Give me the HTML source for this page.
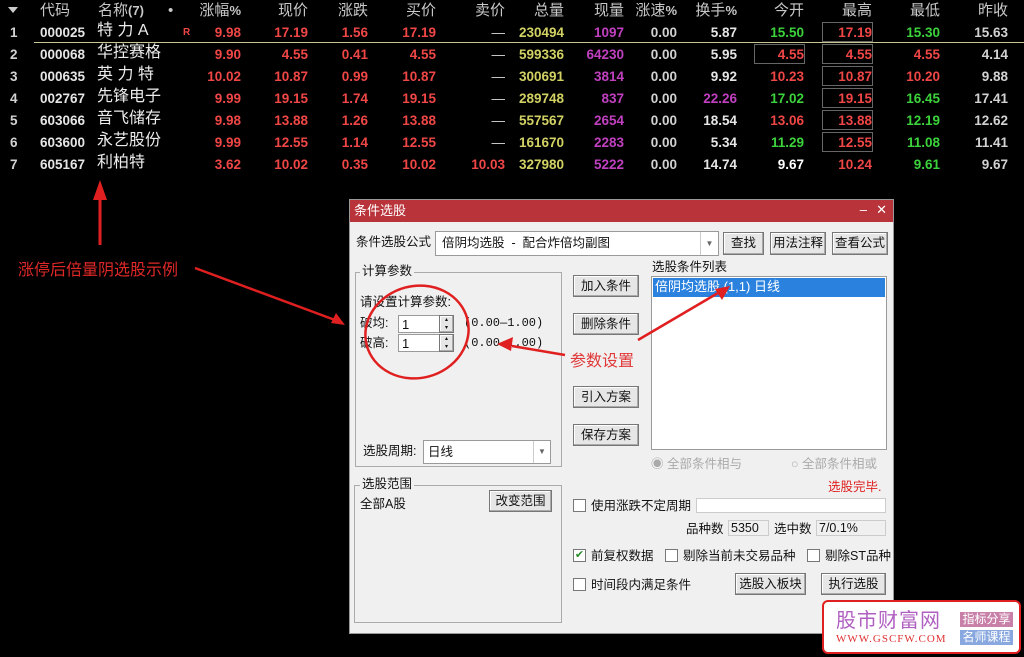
<!DOCTYPE html>
<html><head><meta charset="utf-8">
<style>
*{margin:0;padding:0;box-sizing:border-box}
body{width:1024px;height:657px;background:#000;position:relative;overflow:hidden;font-family:"Liberation Sans","Noto Sans CJK SC",sans-serif}
.a{position:absolute;white-space:nowrap;line-height:17px}
.h{font-size:15px;color:#c8c8c8;top:2px}
.n{font-size:13.5px;font-weight:bold;font-family:"Liberation Sans","Noto Sans CJK SC",sans-serif}
.w{color:#e6e6e6}.r{color:#f04646}.y{color:#d2d264}.p{color:#c040c0}.g{color:#3cd23c}.o{color:#d2d2d2}
.nm{font-size:16px;color:#ececec;line-height:18px}
.bx{position:absolute;border:1px solid #666;height:20px}
.dlg{position:absolute;left:349px;top:199px;width:545px;height:435px;background:#f0f0f0;border:1px solid #999}
.tt{position:absolute;left:0;top:0;width:100%;height:22px;background:#b8333a;color:#fff;font-size:13px;padding:3px 4px;line-height:16px}
.d{position:absolute;font-size:12.5px;color:#111;white-space:nowrap;line-height:15px}
.btn{position:absolute;background:#e6e6e6;border:1px solid #777;font-size:12.5px;color:#111;text-align:center;box-shadow:inset -1px -1px 0 #aaa,inset 1px 1px 0 #fff}
.inp{position:absolute;background:#fff;border:1px solid #9a9a9a}
.gb{position:absolute;border:1px solid #aaa}
.cb{position:absolute;width:13px;height:13px;background:#fff;border:1px solid #777}
</style></head><body>
<div class="a" style="left:8px;top:7px;width:0;height:0;border-left:5px solid transparent;border-right:5px solid transparent;border-top:6px solid #ccc"></div>
<div class="a h" style="left:40px">代码</div>
<div class="a h" style="left:98px">名称<b style="font-size:13px">(7)</b></div>
<div class="a h" style="left:168px">•</div>
<div class="a h" style="right:783px">涨幅<b style="font-size:13px">%</b></div>
<div class="a h" style="right:716px">现价</div>
<div class="a h" style="right:656px">涨跌</div>
<div class="a h" style="right:588px">买价</div>
<div class="a h" style="right:519px">卖价</div>
<div class="a h" style="right:460px">总量</div>
<div class="a h" style="right:400px">现量</div>
<div class="a h" style="right:347px">涨速<b style="font-size:13px">%</b></div>
<div class="a h" style="right:287px">换手<b style="font-size:13px">%</b></div>
<div class="a h" style="right:220px">今开</div>
<div class="a h" style="right:152px">最高</div>
<div class="a h" style="right:84px">最低</div>
<div class="a h" style="right:16px">昨收</div>
<div class="a" style="left:34px;top:42px;width:990px;height:1px;background:#c8c890"></div>
<div class="bx" style="left:822px;top:22px;width:51px"></div>
<div class="bx" style="left:754px;top:44px;width:51px"></div>
<div class="bx" style="left:822px;top:44px;width:51px"></div>
<div class="bx" style="left:822px;top:66px;width:51px"></div>
<div class="bx" style="left:822px;top:88px;width:51px"></div>
<div class="bx" style="left:822px;top:110px;width:51px"></div>
<div class="bx" style="left:822px;top:132px;width:51px"></div>
<div id="rows"></div>
<script>
var D=[
["1","000025","特 力 A","9.98","17.19","1.56","17.19","—","230494","1097","0.00","5.87","15.50","17.19","15.30","15.63","grg","w"],
["2","000068","华控赛格","9.90","4.55","0.41","4.55","—","599336","64230","0.00","5.95","4.55","4.55","4.55","4.14","rrr","w"],
["3","000635","英 力 特","10.02","10.87","0.99","10.87","—","300691","3814","0.00","9.92","10.23","10.87","10.20","9.88","rrr","w"],
["4","002767","先锋电子","9.99","19.15","1.74","19.15","—","289748","837","0.00","22.26","17.02","19.15","16.45","17.41","grg","p"],
["5","603066","音飞储存","9.98","13.88","1.26","13.88","—","557567","2654","0.00","18.54","13.06","13.88","12.19","12.62","rrg","w"],
["6","603600","永艺股份","9.99","12.55","1.14","12.55","—","161670","2283","0.00","5.34","11.29","12.55","11.08","11.41","grg","w"],
["7","605167","利柏特","3.62","10.02","0.35","10.02","10.03","327980","5222","0.00","14.74","9.67","10.24","9.61","9.67","wrg","w"]];
var R=[783,716,656,588,519,460,400,347,287,220,152,84,16];
var h="";
D.forEach(function(d,i){var t=24+i*22;
h+='<div class="a n o" style="left:10px;top:'+t+'px">'+d[0]+'</div>';
h+='<div class="a n w" style="left:40px;top:'+t+'px">'+d[1]+'</div>';
h+='<div class="a nm" style="left:97px;top:'+(t-2)+'px">'+d[2]+'</div>';
if(i==0)h+='<div class="a r" style="left:183px;top:'+(t+3)+'px;font-size:10px;font-weight:bold;line-height:12px">R</div>';
var c=["r","r","r","r",d[7]=="—"?"o":"r","y","p","o",d[17],d[16][0],"r",d[16][2],"o"];
for(var k=0;k<13;k++){var v=d[k+3];
h+='<div class="a n '+c[k]+'" style="right:'+R[k]+'px;top:'+t+'px'+(v=="—"?';font-weight:normal':'')+(k==9&&d[0]=="7"?';color:#fff':'')+'">'+v+'</div>';}
});
document.getElementById("rows").innerHTML=h;
</script>
<div class="a" style="left:18px;top:261px;font-size:16px;color:#e02828;line-height:19px">涨停后倍量阴选股示例</div>
<div class="dlg">
<div class="tt">条件选股<span style="position:absolute;right:26px;top:2px">–</span><span style="position:absolute;right:6px;top:2px">✕</span></div>
<div class="d" style="left:6px;top:35px">条件选股公式</div>
<div class="inp" style="left:85px;top:31px;width:284px;height:25px"><span class="d" style="left:6px;top:4px">倍阴均选股 &nbsp;- &nbsp;配合炸倍均副图</span><span style="position:absolute;right:0;top:0;width:18px;height:23px;border-left:1px solid #ccc;font-size:8px;color:#666;text-align:center;line-height:23px">▼</span></div>
<div class="btn" style="left:373px;top:32px;width:41px;height:23px;line-height:21px">查找</div>
<div class="btn" style="left:420px;top:32px;width:56px;height:23px;line-height:21px">用法注释</div>
<div class="btn" style="left:482px;top:32px;width:56px;height:23px;line-height:21px">查看公式</div>
<div class="gb" style="left:5px;top:72px;width:207px;height:195px"></div>
<div class="d" style="left:10px;top:64px;background:#f0f0f0;padding:0 2px">计算参数</div>
<div class="d" style="left:10px;top:95px">请设置计算参数:</div>
<div class="d" style="left:10px;top:116px">破均:</div>
<div class="d" style="left:10px;top:136px">破高:</div>
<div class="inp" style="left:48px;top:115px;width:42px;height:18px"><span class="d" style="left:3px;top:1px;font-size:13px">1</span></div>
<div class="inp" style="left:48px;top:134px;width:42px;height:18px"><span class="d" style="left:3px;top:1px;font-size:13px">1</span></div>
<div class="btn" style="left:89px;top:115px;width:15px;height:18px;font-size:6px;line-height:8px">▴<br>▾</div>
<div class="btn" style="left:89px;top:134px;width:15px;height:18px;font-size:6px;line-height:8px">▴<br>▾</div>
<div class="d" style="left:114px;top:116px;font-size:12px;font-family:'Liberation Mono',monospace">(0.00—1.00)</div>
<div class="d" style="left:114px;top:136px;font-size:12px;font-family:'Liberation Mono',monospace">(0.00—1.00)</div>
<div class="d" style="left:13px;top:244px">选股周期:</div>
<div class="inp" style="left:73px;top:240px;width:128px;height:24px"><span class="d" style="left:4px;top:4px">日线</span><span style="position:absolute;right:0;top:0;width:17px;height:22px;border-left:1px solid #ccc;font-size:8px;color:#666;text-align:center;line-height:22px">▼</span></div>
<div class="btn" style="left:223px;top:75px;width:66px;height:22px;line-height:20px">加入条件</div>
<div class="btn" style="left:223px;top:113px;width:66px;height:22px;line-height:20px">删除条件</div>
<div class="btn" style="left:223px;top:186px;width:66px;height:22px;line-height:20px">引入方案</div>
<div class="btn" style="left:223px;top:224px;width:66px;height:22px;line-height:20px">保存方案</div>
<div class="d" style="left:220px;top:152px;font-size:16px;color:#e03838;line-height:19px">参数设置</div>
<div class="d" style="left:302px;top:60px">选股条件列表</div>
<div class="inp" style="left:301px;top:76px;width:236px;height:174px"><div style="position:absolute;left:1px;top:1px;width:232px;height:19px;background:#2b82de;color:#fff;font-size:13px;padding:1px 2px;line-height:16px">倍阴均选股 (1,1) 日线</div></div>
<div class="d" style="left:301px;top:257px;color:#aaa">◉ 全部条件相与</div>
<div class="d" style="left:441px;top:257px;color:#aaa">○ 全部条件相或</div>
<div class="gb" style="left:4px;top:285px;width:208px;height:138px"></div>
<div class="d" style="left:10px;top:277px;background:#f0f0f0;padding:0 2px">选股范围</div>
<div class="d" style="left:10px;top:297px">全部A股</div>
<div class="btn" style="left:139px;top:290px;width:63px;height:22px;line-height:20px">改变范围</div>
<div class="d" style="left:478px;top:280px;color:#e02020">选股完毕.</div>
<div class="cb" style="left:223px;top:299px"></div>
<div class="d" style="left:241px;top:299px">使用涨跌不定周期</div>
<div class="inp" style="left:346px;top:298px;width:190px;height:15px;border-color:#ccc"></div>
<div class="d" style="left:336px;top:322px">品种数</div>
<div class="inp" style="left:378px;top:320px;width:41px;height:16px;background:#f0f0f0;border-color:#ccc"><span class="d" style="left:2px;top:0">5350</span></div>
<div class="d" style="left:424px;top:322px">选中数</div>
<div class="inp" style="left:466px;top:320px;width:70px;height:16px;background:#f0f0f0;border-color:#ccc"><span class="d" style="left:2px;top:0">7/0.1%</span></div>
<div class="cb" style="left:223px;top:349px;color:#2a8a2a;font-size:11px;line-height:11px;text-align:center">✔</div>
<div class="d" style="left:241px;top:349px">前复权数据</div>
<div class="cb" style="left:315px;top:349px"></div>
<div class="d" style="left:333px;top:349px">剔除当前未交易品种</div>
<div class="cb" style="left:457px;top:349px"></div>
<div class="d" style="left:475px;top:349px">剔除ST品种</div>
<div class="cb" style="left:223px;top:378px"></div>
<div class="d" style="left:241px;top:378px">时间段内满足条件</div>
<div class="btn" style="left:385px;top:373px;width:71px;height:22px;line-height:20px">选股入板块</div>
<div class="btn" style="left:471px;top:373px;width:65px;height:22px;line-height:20px">执行选股</div>
</div>
<div class="a" style="left:822px;top:600px;width:199px;height:54px;background:#fff;border:2px solid #e02020;border-radius:6px">
<div class="a" style="left:12px;top:8px;font-size:20px;color:#b060c0;letter-spacing:1px;line-height:22px">股市财富网</div>
<div class="a" style="left:12px;top:31px;font-size:11px;color:#e03030;font-family:'Liberation Serif',serif;letter-spacing:1px;line-height:13px">WWW.GSCFW.COM</div>
<div class="a" style="left:136px;top:10px;width:53px;height:15px;background:#c880a8;color:#fff;font-size:12px;text-align:center;line-height:15px">指标分享</div>
<div class="a" style="left:136px;top:28px;width:53px;height:15px;background:#8aa8e0;color:#fff;font-size:12px;text-align:center;line-height:15px">名师课程</div>
</div>
<svg class="a" style="left:0;top:0" width="1024" height="657">
<path d="M100,245 L100,196" stroke="#e02020" stroke-width="3"/>
<path d="M100,180 l-7,20 h14 z" fill="#e02020"/>
<path d="M195,268 L335,320" stroke="#e02020" stroke-width="2.5"/>
<path d="M345,325 l-14,-2 l5,-10 z" fill="#e02020"/>
<path d="M565,355 L512,346" stroke="#e02020" stroke-width="2.5"/>
<path d="M497,344 l16,-7 l-2,14 z" fill="#e02020"/>
<path d="M638,340 L718,293" stroke="#e02020" stroke-width="2.5"/>
<path d="M730,286 l-8,14 l-7,-11 z" fill="#e02020"/>
<ellipse cx="417" cy="332" rx="52" ry="46" fill="none" stroke="#e02020" stroke-width="2.5" transform="rotate(-15 417 332)"/>
</svg>
</body></html>
